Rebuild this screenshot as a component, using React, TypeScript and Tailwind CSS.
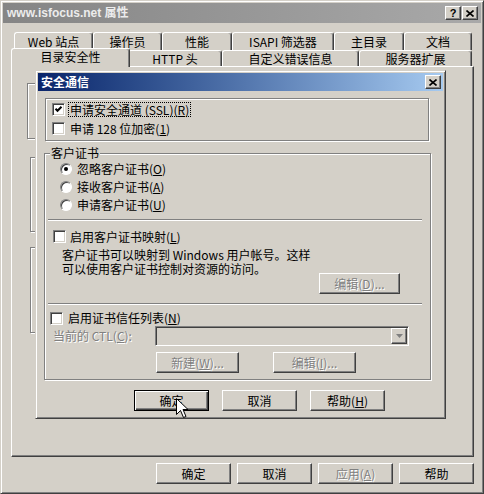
import React from "react";

const RAISED =
  "border border-t-white border-l-white border-r-[#404040] border-b-[#404040] shadow-[inset_-1px_-1px_0_#808080]";
const DEFAULT_BTN =
  "border border-black shadow-[inset_1px_1px_0_#fff,inset_-1px_-1px_0_#404040,inset_-2px_-2px_0_#808080]";
const ETCHED = "border border-[#808080] shadow-[inset_1px_1px_0_#fff,1px_1px_0_#fff]";
const DIS = "text-[#808080] [text-shadow:1px_1px_0_#fff]";

function U({ children }: { children: React.ReactNode }) {
  return <span className="underline underline-offset-[1px]">{children}</span>;
}

function Btn({
  children,
  className = "",
  disabled = false,
  def = false,
}: {
  children: React.ReactNode;
  className?: string;
  disabled?: boolean;
  def?: boolean;
}) {
  return (
    <div
      className={`flex items-center justify-center bg-[#d4d0c8] whitespace-nowrap ${def ? DEFAULT_BTN : RAISED} ${
        disabled ? DIS : "text-black"
      } ${className}`}
    >
      {children}
    </div>
  );
}

function Check({ checked = false }: { checked?: boolean }) {
  return (
    <div className="relative w-[13px] h-[13px] shrink-0 bg-white border border-t-[#808080] border-l-[#808080] border-r-white border-b-white shadow-[inset_1px_1px_0_#404040,inset_-1px_-1px_0_#d4d0c8]">
      {checked && (
        <svg className="absolute left-[1px] top-[1px]" width="9" height="9" viewBox="0 0 9 9">
          <polyline points="1.5,3.8 3.5,5.8 7.5,1.8" fill="none" stroke="black" strokeWidth="2" />
        </svg>
      )}
    </div>
  );
}

function Radio({ checked = false }: { checked?: boolean }) {
  return (
    <div className="relative w-[12px] h-[12px] shrink-0 rounded-full bg-white border border-t-[#808080] border-l-[#808080] border-r-white border-b-white shadow-[inset_1px_1px_0_#404040]">
      {checked && <div className="absolute left-[3px] top-[3px] w-[4px] h-[4px] rounded-full bg-black" />}
    </div>
  );
}

function Tab({ label, className = "" }: { label: React.ReactNode; className?: string }) {
  return (
    <div
      className={`flex items-center justify-center shrink-0 bg-[#d4d0c8] border-t border-l border-r border-t-white border-l-white border-r-[#404040] shadow-[inset_-1px_0_0_#808080] rounded-t-[3px] whitespace-nowrap ${className}`}
    >
      {label}
    </div>
  );
}

function Sep({ className = "" }: { className?: string }) {
  return <div className={`h-[2px] border-t border-t-[#808080] border-b border-b-white ${className}`} />;
}

export default function App() {
  return (
    <div className="relative w-[484px] h-[494px] overflow-hidden bg-[#d4d0c8] border border-t-[#d4d0c8] border-l-[#d4d0c8] border-r-[#404040] border-b-[#404040] shadow-[inset_1px_1px_0_#fff,inset_-1px_-1px_0_#808080] font-['Noto_Sans_CJK_SC',sans-serif] text-[12px] leading-[14px] text-black">
      {/* Title bar */}
      <div className="mt-[2px] mx-[2px] h-[20px] flex items-center bg-gradient-to-r from-[#858585] to-[#a9a9a9] pl-[4px] pr-[3px]">
        <span className="font-['Liberation_Sans','Noto_Sans_CJK_SC',sans-serif] font-bold text-[12px] text-[#ececec]">
          www.isfocus.net 属性
        </span>
        <div className="ml-auto flex">
          <div className={`w-[16px] h-[14px] bg-[#d4d0c8] flex items-center justify-center ${RAISED}`}>
            <span className="font-['Liberation_Sans',sans-serif] font-bold text-[11px] leading-none">?</span>
          </div>
          <div className={`w-[16px] h-[14px] ml-[1px] bg-[#d4d0c8] flex items-center justify-center ${RAISED}`}>
            <svg width="8" height="7" viewBox="0 0 8 7">
              <path d="M0.5 0.5 L7.5 6.5 M7.5 0.5 L0.5 6.5" stroke="black" strokeWidth="1.6" />
            </svg>
          </div>
        </div>
      </div>

      {/* Tab row 1 */}
      <div className="mt-[9px] ml-[13px] h-[18px] flex">
        <Tab label="Web 站点" className="w-[79px] h-[18px]" />
        <Tab label="操作员" className="w-[69px] h-[18px]" />
        <Tab label="性能" className="w-[70px] h-[18px]" />
        <Tab label="ISAPI 筛选器" className="w-[102px] h-[18px]" />
        <Tab label="主目录" className="w-[70px] h-[18px]" />
        <Tab label="文档" className="w-[68px] h-[18px]" />
      </div>
      {/* Tab row 2 */}
      <div className="relative z-10 ml-[12px] h-[16px] flex items-end">
        <Tab label="目录安全性" className="w-[119px] h-[19px] -ml-[2px] -mr-[2px] -mb-[1px] relative z-10 pb-[2px]" />
        <Tab label="HTTP 头" className="w-[94px] h-[16px]" />
        <Tab label="自定义错误信息" className="w-[137px] h-[16px]" />
        <Tab label="服务器扩展" className="w-[113px] h-[16px]" />
      </div>

      {/* Tab panel */}
      <div className="ml-[10px] w-[463px] h-[391px] border border-t-white border-l-white border-r-[#404040] border-b-[#404040] shadow-[inset_-1px_-1px_0_#808080] flex flex-col">
        <div className={`mt-[16px] ml-[15px] w-[412px] h-[56px] ${ETCHED}`} />
        <div className={`mt-[18px] ml-[18px] w-[409px] h-[75px] ${ETCHED}`} />
        <div className={`mt-[15px] ml-[18px] w-[409px] h-[86px] ${ETCHED}`} />
      </div>

      {/* Bottom buttons */}
      <div className="mt-[6px] ml-[155px] flex gap-[6px]">
        <Btn className="w-[75px] h-[21px]">确定</Btn>
        <Btn className="w-[75px] h-[21px]">取消</Btn>
        <Btn className="w-[75px] h-[21px]" disabled>
          应用(<U>A</U>)
        </Btn>
        <Btn className="w-[75px] h-[21px]">帮助</Btn>
      </div>

      {/* Inner dialog */}
      <div className="absolute left-[34px] top-[69px] w-[411px] h-[349px] bg-[#d4d0c8] border border-t-[#d4d0c8] border-l-[#d4d0c8] border-r-[#404040] border-b-[#404040] shadow-[inset_1px_1px_0_#fff,inset_-1px_-1px_0_#808080] flex flex-col">
        <div className="mt-[2px] mx-[2px] h-[18px] flex items-center bg-gradient-to-r from-[#0a246a] to-[#a6caf0] pl-[3px] pr-[2px]">
          <span className="font-bold text-white text-[12px]">安全通信</span>
          <div className={`ml-auto w-[16px] h-[14px] bg-[#d4d0c8] flex items-center justify-center ${RAISED}`}>
            <svg width="8" height="7" viewBox="0 0 8 7">
              <path d="M0.5 0.5 L7.5 6.5 M7.5 0.5 L0.5 6.5" stroke="black" strokeWidth="1.6" />
            </svg>
          </div>
        </div>

        {/* SSL group */}
        <div className={`mt-[7px] ml-[9px] w-[384px] h-[43px] pt-[1px] pl-[6px] ${ETCHED}`}>
          <div className="h-[19px] flex items-center">
            <Check checked />
            <span className="ml-[3px] border border-dotted border-black px-[1px] leading-[13px]">
              申请安全通道 (SSL)(<U>R</U>)
            </span>
          </div>
          <div className="h-[19px] flex items-center">
            <Check />
            <span className="ml-[5px]">
              申请 128 位加密(<U>1</U>)
            </span>
          </div>
        </div>

        {/* Client certificates group */}
        <div className={`relative mt-[12px] ml-[8px] w-[387px] h-[227px] ${ETCHED}`}>
          <span className="absolute left-[5px] -top-[8px] px-[1px] bg-[#d4d0c8]">客户证书</span>
          <div className="pt-[6px] pl-[15px]">
            <div className="h-[18px] flex items-center">
              <Radio checked />
              <span className="ml-[5px]">
                忽略客户证书(<U>O</U>)
              </span>
            </div>
            <div className="h-[18px] flex items-center">
              <Radio />
              <span className="ml-[5px]">
                接收客户证书(<U>A</U>)
              </span>
            </div>
            <div className="h-[18px] flex items-center">
              <Radio />
              <span className="ml-[5px]">
                申请客户证书(<U>U</U>)
              </span>
            </div>
          </div>
          <Sep className="mt-[5px] ml-[3px] w-[374px]" />
          <div className="mt-[6px] h-[19px] pl-[8px] flex items-center">
            <Check />
            <span className="ml-[4px]">
              启用客户证书映射(<U>L</U>)
            </span>
          </div>
          <div className="mt-[2px] pl-[17px] leading-[14px] whitespace-nowrap">
            <div>客户证书可以映射到 Windows 用户帐号。这样</div>
            <div>可以使用客户证书控制对资源的访问。</div>
          </div>
          <div className="mt-[-3px] flex justify-end pr-[30px]">
            <Btn className="w-[81px] h-[21px]" disabled>
              编辑(<U>D</U>)...
            </Btn>
          </div>
          <Sep className="mt-[9px] ml-[3px] w-[374px]" />
          <div className="mt-[5px] h-[16px] pl-[5px] flex items-center">
            <Check />
            <span className="ml-[5px]">
              启用证书信任列表(<U>N</U>)
            </span>
          </div>
          <div className="h-[20px] pl-[8px] flex items-center">
            <span className={`w-[102px] ${DIS}`}>
              当前的 CTL(<U>C</U>):
            </span>
            <div className="relative w-[254px] h-[20px] bg-[#d4d0c8] border border-t-[#808080] border-l-[#808080] border-r-white border-b-white shadow-[inset_1px_1px_0_#404040,inset_-1px_-1px_0_#d4d0c8] flex justify-end items-center pr-[1px]">
              <div className={`w-[16px] h-[16px] flex items-center justify-center ${RAISED}`}>
                <svg width="7" height="4" viewBox="0 0 7 4">
                  <path d="M0 0 L7 0 L3.5 4 Z" fill="#808080" />
                </svg>
              </div>
            </div>
          </div>
          <div className="mt-[6px] ml-[111px] flex gap-[34px]">
            <Btn className="w-[83px] h-[21px]" disabled>
              新建(<U>W</U>)...
            </Btn>
            <Btn className="w-[83px] h-[21px]" disabled>
              编辑(<U>I</U>)...
            </Btn>
          </div>
        </div>

        {/* Dialog buttons */}
        <div className="mt-[10px] ml-[98px] flex gap-[13px]">
          <Btn className="w-[75px] h-[21px]" def>
            确定
          </Btn>
          <Btn className="w-[75px] h-[21px]">取消</Btn>
          <Btn className="w-[75px] h-[21px]">
            帮助(<U>H</U>)
          </Btn>
        </div>
      </div>

      {/* Mouse cursor */}
      <svg className="absolute left-[175px] top-[397px]" width="13" height="21" viewBox="0 0 13 21">
        <path
          d="M0.5 0.5 L0.5 16.5 L4.5 12.5 L7.5 19.5 L10 18.5 L7 11.5 L12 11.5 Z"
          fill="white"
          stroke="black"
          strokeWidth="1"
        />
      </svg>
    </div>
  );
}
